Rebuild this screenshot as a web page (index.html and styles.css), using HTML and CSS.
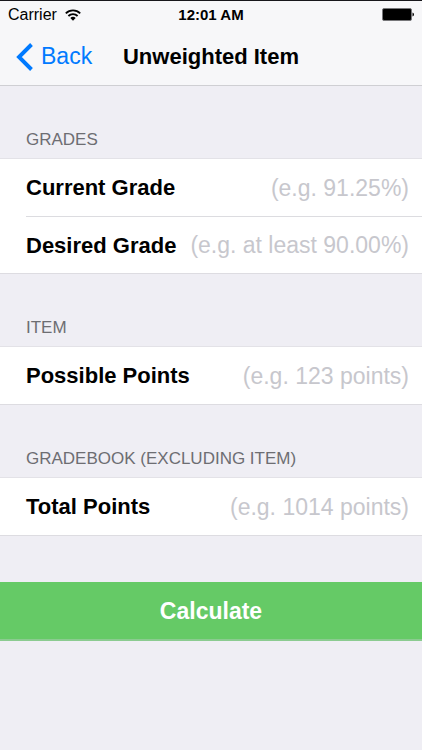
FILE: index.html
```html
<!DOCTYPE html>
<html lang="en">
<head>
<meta charset="utf-8">
<meta name="viewport" content="width=device-width, initial-scale=1">
<title>Unweighted Item</title>
<link rel="stylesheet" href="styles.css">
</head>
<body>
<header class="top">
  <div class="status">
    <div class="carrier"><span>Carrier</span>
      <svg class="wifi" viewBox="0 0 16 12" aria-hidden="true"><path d="M.8 4.300a10.300 10.300 0 0 1 14.400 0M3.400 7a6.500 6.500 0 0 1 9.200 0" fill="none" stroke="#000" stroke-width="1.800"/><path d="M5.300 9a3.800 3.800 0 0 1 5.400 0L8 11.700z"/></svg>
    </div>
    <time class="clock">12:01 AM</time>
    <svg class="battery" viewBox="0 0 32 13" aria-hidden="true"><rect x=".5" y=".5" width="29" height="12" rx="1.500" fill="#000" stroke="#77777a"/><path d="M30.500 4.500q1.500.5 1.500 2t-1.500 2z"/></svg>
  </div>
  <nav class="nav">
    <a class="back" href="#"><svg class="chevron" viewBox="0 0 17 28" aria-hidden="true"><path d="M15.500 1.500L3 14l12.500 12.500" fill="none" stroke="#007aff" stroke-width="3.900"/></svg>Back</a>
    <h1 class="title">Unweighted Item</h1>
  </nav>
</header>
<form class="form">
  <section class="group">
    <h2 class="heading">GRADES</h2>
    <div class="rows">
      <div class="row"><label for="current">Current Grade</label><input id="current" type="text" placeholder="(e.g. 91.25%)"></div>
      <div class="row"><label for="desired">Desired Grade</label><input id="desired" type="text" placeholder="(e.g. at least 90.00%)"></div>
    </div>
  </section>
  <section class="group">
    <h2 class="heading">ITEM</h2>
    <div class="rows">
      <div class="row"><label for="possible">Possible Points</label><input id="possible" type="text" placeholder="(e.g. 123 points)"></div>
    </div>
  </section>
  <section class="group">
    <h2 class="heading">GRADEBOOK (EXCLUDING ITEM)</h2>
    <div class="rows">
      <div class="row"><label for="total">Total Points</label><input id="total" type="text" placeholder="(e.g. 1014 points)"></div>
    </div>
  </section>
  <button class="calculate" type="button">Calculate</button>
</form>
</body>
</html>
```
FILE: styles.css
```css
* { box-sizing: border-box; }

body {
  margin: 0;
  min-height: 100vh;
  background: #efeef4;
  color: #000;
  font-family: "Liberation Sans", Arial, sans-serif;
}

.top {
  background: #f7f7f9;
  border-top: 1px solid #18171c;
  border-bottom: 1px solid #cfcfd3;
}

.status {
  display: grid;
  grid-template-columns: 1fr auto 1fr;
  align-items: center;
  height: 27px;
  padding: 0 8px;
  font-size: 16px;
}

.carrier { display: flex; align-items: center; gap: 8px; }
.wifi { width: 16px; height: 12px; }
.clock { font-size: 15px; font-weight: 700; }
.battery { width: 32px; height: 13px; justify-self: end; }

.nav {
  display: grid;
  grid-template-columns: 1fr auto 1fr;
  align-items: center;
  height: 57px;
  padding: 0 16px;
}

.back {
  display: flex;
  align-items: center;
  gap: 8px;
  color: #007aff;
  font-size: 23px;
  text-decoration: none;
}

.chevron { width: 17px; height: 28px; }

.title {
  margin: 0;
  font-size: 22px;
  font-weight: 700;
}

.group { padding-top: 40px; }

.heading {
  margin: 0;
  padding: 4px 26px 8px;
  color: #6d6d72;
  font-size: 17px;
  font-weight: 400;
  line-height: 20px;
}

.rows {
  background: #fff;
  border-top: 1px solid #e3e2e7;
  border-bottom: 1px solid #dddce1;
}

.row {
  display: flex;
  align-items: center;
  gap: 12px;
  height: 57px;
  margin-left: 26px;
  padding-top: 1px;
  padding-right: 13px;
  font-size: 22px;
}

.row + .row { border-top: 1px solid #dcdce0; }
.row label { font-weight: 700; white-space: nowrap; }

.row input {
  flex: 1;
  min-width: 0;
  padding: 0;
  border: 0;
  background: none;
  font: inherit;
  font-size: 23px;
  text-align: right;
}

.row input::placeholder { color: #c7c7cd; opacity: 1; }

.calculate {
  display: block;
  width: 100%;
  height: 59px;
  margin-top: 46px;
  padding: 2px 0 0;
  border: 0;
  border-bottom: 2px solid #8bcb90;
  background: #65ca66;
  color: #fff;
  font: inherit;
  font-size: 23px;
  font-weight: 700;
}
```
